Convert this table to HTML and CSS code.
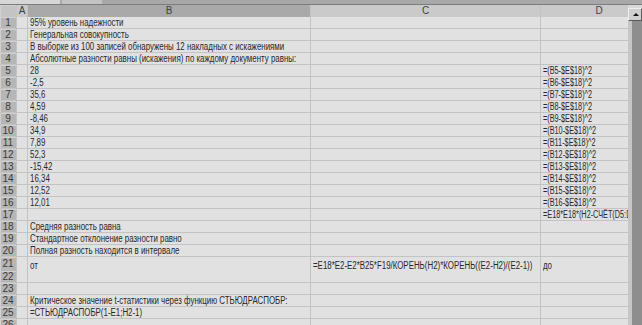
FILE: index.html
```html
<!DOCTYPE html>
<html lang="ru">
<head>
    <meta charset="UTF-8">
    <title>Лист1</title>
    <link rel="stylesheet" href="styles.css">
</head>
<body>
    <div class="toolbar">
        <span class="namebox"></span>
        <span class="fx"></span>
    </div>
    <div class="window">
        <div class="sheet">
            <div class="row head">
                <div class="rh corner"></div>
                <div class="ch">A</div>
                <div class="ch sel">B</div>
                <div class="ch">C</div>
                <div class="ch">D</div>
            </div>
            <div class="row"><div class="rh">1</div><div class="c"></div><div class="c"><span>95% уровень надежности</span></div><div class="c"></div><div class="c"></div></div>
            <div class="row"><div class="rh">2</div><div class="c"></div><div class="c"><span>Генеральная совокупность</span></div><div class="c"></div><div class="c"></div></div>
            <div class="row"><div class="rh">3</div><div class="c"></div><div class="c"><span>В выборке из 100 записей обнаружены 12 накладных с искажениями</span></div><div class="c"></div><div class="c"></div></div>
            <div class="row"><div class="rh">4</div><div class="c"></div><div class="c"><span>Абсолютные разности равны (искажения) по каждому документу равны:</span></div><div class="c"></div><div class="c"></div></div>
            <div class="row"><div class="rh">5</div><div class="c"></div><div class="c"><span>28</span></div><div class="c"></div><div class="c d"><span>=(B5-$E$18)^2</span></div></div>
            <div class="row"><div class="rh">6</div><div class="c"></div><div class="c"><span>-2,5</span></div><div class="c"></div><div class="c d"><span>=(B6-$E$18)^2</span></div></div>
            <div class="row"><div class="rh">7</div><div class="c"></div><div class="c"><span>35,6</span></div><div class="c"></div><div class="c d"><span>=(B7-$E$18)^2</span></div></div>
            <div class="row"><div class="rh">8</div><div class="c"></div><div class="c"><span>4,59</span></div><div class="c"></div><div class="c d"><span>=(B8-$E$18)^2</span></div></div>
            <div class="row"><div class="rh">9</div><div class="c"></div><div class="c"><span>-8,46</span></div><div class="c"></div><div class="c d"><span>=(B9-$E$18)^2</span></div></div>
            <div class="row"><div class="rh">10</div><div class="c"></div><div class="c"><span>34,9</span></div><div class="c"></div><div class="c d"><span>=(B10-$E$18)^2</span></div></div>
            <div class="row"><div class="rh">11</div><div class="c"></div><div class="c"><span>7,89</span></div><div class="c"></div><div class="c d"><span>=(B11-$E$18)^2</span></div></div>
            <div class="row"><div class="rh">12</div><div class="c"></div><div class="c"><span>52,3</span></div><div class="c"></div><div class="c d"><span>=(B12-$E$18)^2</span></div></div>
            <div class="row"><div class="rh">13</div><div class="c"></div><div class="c"><span>-15,42</span></div><div class="c"></div><div class="c d"><span>=(B13-$E$18)^2</span></div></div>
            <div class="row"><div class="rh">14</div><div class="c"></div><div class="c"><span>16,34</span></div><div class="c"></div><div class="c d"><span>=(B14-$E$18)^2</span></div></div>
            <div class="row"><div class="rh">15</div><div class="c"></div><div class="c"><span>12,52</span></div><div class="c"></div><div class="c d"><span>=(B15-$E$18)^2</span></div></div>
            <div class="row"><div class="rh">16</div><div class="c"></div><div class="c"><span>12,01</span></div><div class="c"></div><div class="c d"><span>=(B16-$E$18)^2</span></div></div>
            <div class="row"><div class="rh">17</div><div class="c"></div><div class="c"></div><div class="c"></div><div class="c d"><span>=E18*E18*(H2-СЧЁТ(D5:D16))</span></div></div>
            <div class="row"><div class="rh">18</div><div class="c"></div><div class="c"><span>Средняя разность равна</span></div><div class="c"></div><div class="c"></div></div>
            <div class="row"><div class="rh">19</div><div class="c"></div><div class="c"><span>Стандартное отклонение разности равно</span></div><div class="c"></div><div class="c"></div></div>
            <div class="row"><div class="rh">20</div><div class="c"></div><div class="c"><span>Полная разность находится в интервале</span></div><div class="c"></div><div class="c"></div></div>
            <div class="row tall"><div class="rh">21</div><div class="c"></div><div class="c"><span>от</span></div><div class="c"><span>=E18*E2-E2*B25*F19/КОРЕНЬ(H2)*КОРЕНЬ((E2-H2)/(E2-1))</span></div><div class="c"><span>до</span></div></div>
            <div class="row"><div class="rh">22</div><div class="c"></div><div class="c"></div><div class="c"></div><div class="c"></div></div>
            <div class="row"><div class="rh">23</div><div class="c"></div><div class="c"></div><div class="c"></div><div class="c"></div></div>
            <div class="row"><div class="rh">24</div><div class="c"></div><div class="c"><span>Критическое значение t-статистики через функцию СТЬЮДРАСПОБР:</span></div><div class="c"></div><div class="c"></div></div>
            <div class="row"><div class="rh">25</div><div class="c"></div><div class="c"><span>=СТЬЮДРАСПОБР(1-E1;H2-1)</span></div><div class="c"></div><div class="c"></div></div>
            <div class="row"><div class="rh">26</div><div class="c"></div><div class="c"></div><div class="c"></div><div class="c"></div></div>
        </div>
        <div class="vscroll">
            <div class="btn-up"></div>
            <div class="track"></div>
        </div>
    </div>
</body>
</html>
```
FILE: styles.css
```css
body {
    margin: 0;
    width: 642px;
    height: 325px;
    overflow: hidden;
    background-color: #dcdcdc;
    font-family: "Liberation Sans", Arial, sans-serif;
    font-size: 10px;
    color: #282828;
}
/* остаток панели формул сверху */
.toolbar {
    height: 4px;
    display: flex;
    background-color: #a8a8a8;
    border-bottom: 1px solid #7c7c7c;
}
.namebox {
    width: 60px;
    background-color: #d6d6d6;
}
.fx {
    width: 40px;
    margin-left: 2px;
    background-color: #c4c4c4;
}
.window {
    display: flex;
    height: 320px;
}
.sheet {
    width: 628px;
    overflow: hidden;
    display: flex;
    flex-direction: column;
    gap: 1px;
    background-color: #c3c3c3; /* линии сетки */
}
.row {
    display: grid;
    grid-template-columns: 16px 10px 282px 229px 116px;
    gap: 1px;
    height: 11px;
    flex: none;
}
.row.tall {
    height: 13px;
}
.c {
    background-color: #e1e1e1;
    padding-left: 2px;
    line-height: 11px;
    white-space: nowrap;
    display: flex;
    align-items: flex-end;
}
/* шрифт на листе узкий, сжимаем по ширине */
.c span {
    display: inline-block;
    transform: scaleX(0.79);
    transform-origin: 0 100%;
}
.c.d span {
    transform: scaleX(0.73);
}
.rh {
    background-color: #b6b6b6;
    box-shadow: inset 1px 1px 0 #d0d0d0;
    text-align: center;
    line-height: 11px;
    font-size: 10px;
    color: #3a3a3a;
}
.tall .rh {
    line-height: 14px;
}
.head {
    height: 11px;
}
.ch {
    background-color: #cacaca;
    text-align: center;
    line-height: 12px;
    color: #404040;
}
.ch.sel {
    background-color: #a9a9a9;
}
.corner {
    background-color: #c4c4c4;
}
.vscroll {
    width: 14px;
    display: flex;
    flex-direction: column;
    background-color: #d8d8d8;
    padding-top: 3px;
}
.btn-up {
    height: 13px;
    background-color: #cfcfcf;
    border: 1px solid;
    border-color: #f0f0f0 #5a5a5a #5a5a5a #f0f0f0;
    box-sizing: border-box;
    position: relative;
}
.btn-up::after {
    content: "";
    position: absolute;
    left: 4px;
    top: 4px;
    border-left: 3px solid transparent;
    border-right: 3px solid transparent;
    border-bottom: 3px solid #111;
}
.track {
    flex: 1;
    background: linear-gradient(to right, #c6c6c6 0, #c6c6c6 4px, #8e8e8e 4px);
}
```
